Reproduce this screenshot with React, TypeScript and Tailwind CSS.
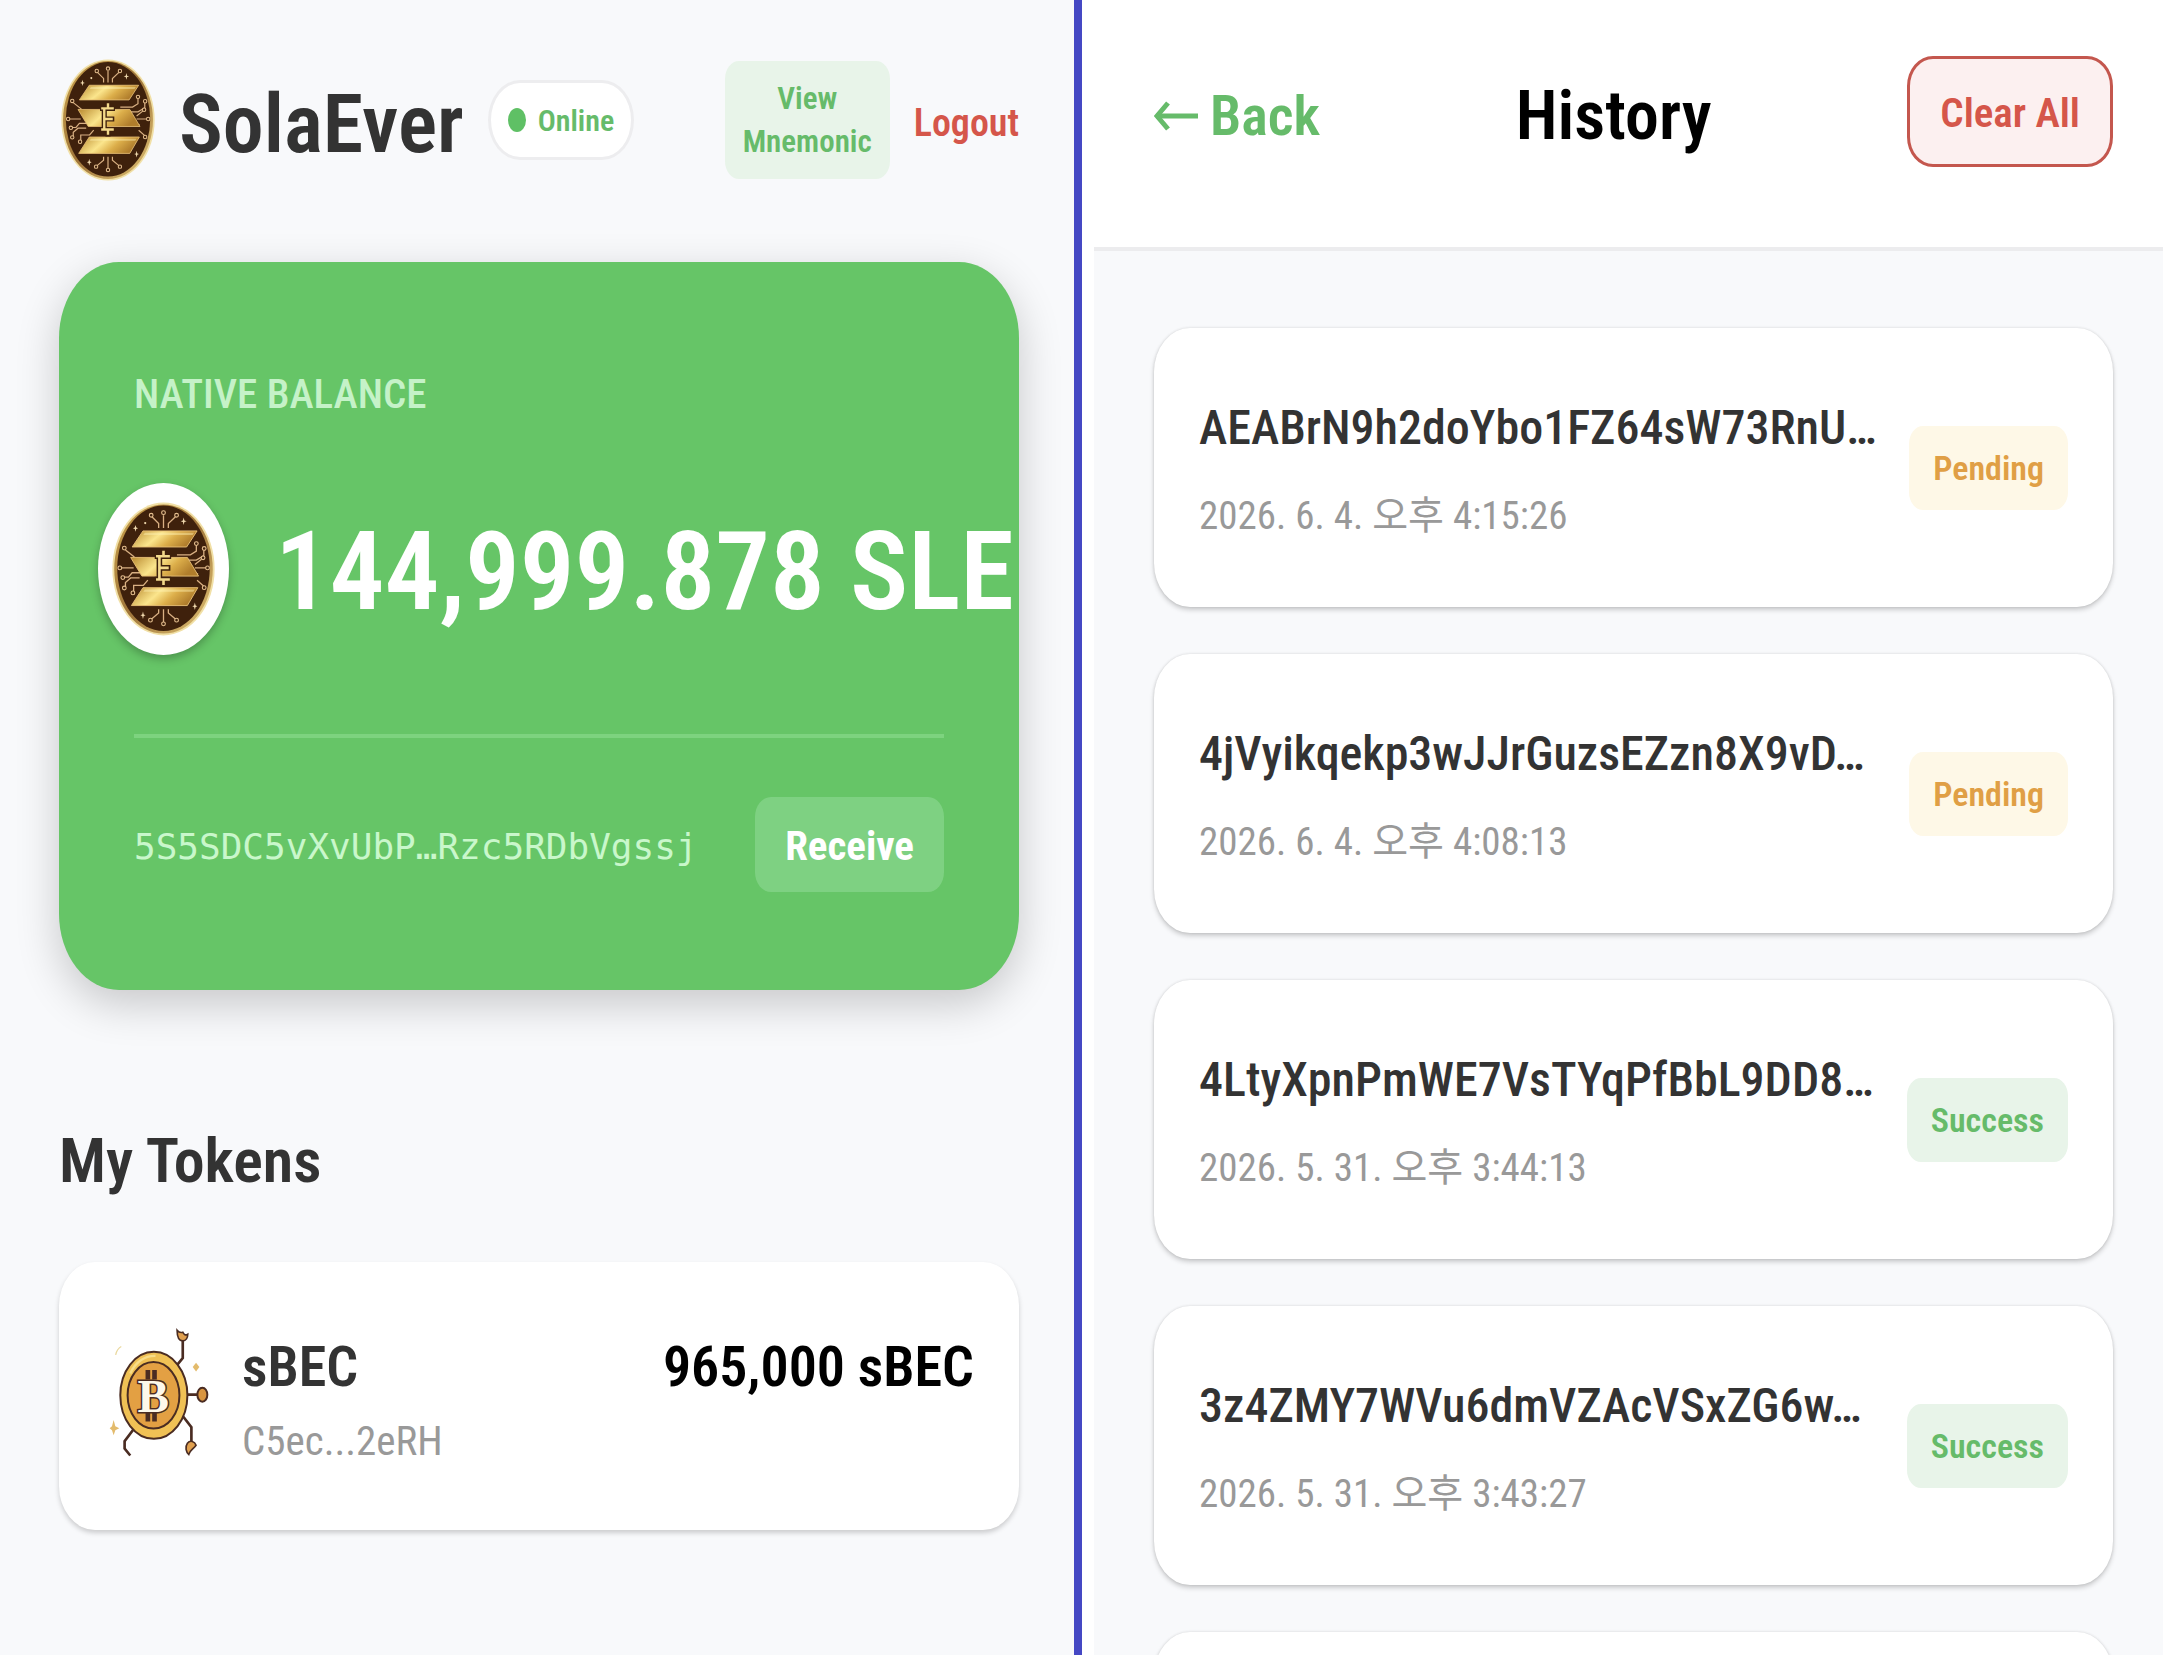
type Status = 'Pending' | 'Success'

type Tx = {
  signature: string
  date: string
  status: Status
}

const transactions: Tx[] = [
  { signature: 'AEABrN9h2doYbo1FZ64sW73RnU…', date: '2026. 6. 4. 오후 4:15:26', status: 'Pending' },
  { signature: '4jVyikqekp3wJJrGuzsEZzn8X9vD…', date: '2026. 6. 4. 오후 4:08:13', status: 'Pending' },
  { signature: '4LtyXpnPmWE7VsTYqPfBbL9DD8…', date: '2026. 5. 31. 오후 3:44:13', status: 'Success' },
  { signature: '3z4ZMY7WVu6dmVZAcVSxZG6w…', date: '2026. 5. 31. 오후 3:43:27', status: 'Success' },
]

const badgeColors: Record<Status, string> = {
  Pending: 'bg-[#fef8e7] text-[#e09f45]',
  Success: 'bg-[#e8f4e9] text-[#66bb6a]',
}

const cardStyle = 'rounded-[36px/44px] bg-white shadow-[0_3px_5px_rgba(0,0,0,0.18),0_0_3px_rgba(0,0,0,0.12)]'

function SolaLogo({ className }: { className: string }) {
  return (
    <svg viewBox="62 65 276 358" className={className} aria-hidden="true">
      <defs>
        <linearGradient id="gold" x1="0" y1="0" x2="1" y2="0.3">
          <stop offset="0" stopColor="#b8892f" />
          <stop offset="0.45" stopColor="#fbe58c" />
          <stop offset="0.7" stopColor="#dcae4a" />
          <stop offset="1" stopColor="#b07d2c" />
        </linearGradient>
        <linearGradient id="rim" x1="0" y1="0" x2="1" y2="1">
          <stop offset="0" stopColor="#c9a14c" />
          <stop offset="0.5" stopColor="#a0763a" />
          <stop offset="1" stopColor="#e3c578" />
        </linearGradient>
      </defs>
      <ellipse cx="200" cy="244" rx="137" ry="178" fill="#f1e0a6" />
      <ellipse cx="200" cy="244" rx="132" ry="173" fill="url(#rim)" />
      <ellipse cx="200" cy="242" rx="124" ry="168" fill="#3f210c" />
      <g fill="none" stroke="#d9b083" strokeWidth="3.5">
        <path d="M200 134V100M187 134V122L169 104M213 134V122L232 104" />
        <path d="M200 352V386M187 352V362L168 378M213 352V362L232 378" />
        <path d="M236 206H272L288 196V180M266 220H288L308 208V194M284 232L302 218M284 241H314M292 256L288 262" />
        <path d="M88 241H120M98 193L122 212M92 266H106L116 254H138M98 291V280L112 268H136M120 303V288H146L158 274M290 274L308 290" />
      </g>
      <g fill="#3f210c" stroke="#e5bf8f" strokeWidth="3">
        <circle cx="200" cy="93" r="5" />
        <circle cx="167" cy="100" r="5" />
        <circle cx="235" cy="100" r="5" />
        <circle cx="200" cy="391" r="5" />
        <circle cx="165" cy="381" r="5" />
        <circle cx="235" cy="381" r="5" />
        <circle cx="288" cy="176" r="5" />
        <circle cx="309" cy="189" r="5" />
        <circle cx="306" cy="214" r="5" />
        <circle cx="318" cy="241" r="5" />
        <circle cx="309" cy="294" r="5" />
        <circle cx="83" cy="241" r="5" />
        <circle cx="95" cy="188" r="5" />
        <circle cx="91" cy="267" r="5" />
        <circle cx="95" cy="295" r="5" />
        <circle cx="118" cy="308" r="5" />
      </g>
      <g fill="url(#gold)" stroke="#e6bd74" strokeWidth="2.5">
        <path d="M145 142H290L262 185H116Z" />
        <path d="M112 213H264L294 263H142Z" />
        <path d="M145 294H292L264 342H114Z" />
      </g>
      <path d="M150 147H282L278 153H146Z M150 299H284L280 305H146Z" fill="#fff2b4" opacity="0.45" />
      <g fill="#f0d9ae">
        <path d="M125 126L127 133L132 135L127 137L125 144L123 137L118 135L123 133Z" />
        <path d="M254 106L256 114L262 116L256 118L254 126L252 118L246 116L252 114Z" />
        <path d="M145 358L147 366L152 368L147 370L145 378L143 370L138 368L143 366Z" />
        <path d="M284 334L286 342L291 344L286 346L284 354L282 346L277 344L282 342Z" />
        <circle cx="151" cy="121" r="3" />
      </g>
      <g stroke="#3f210c" strokeWidth="15" fill="none" strokeLinecap="square">
        <path d="M200 197V208M200 274V285M189 211V271M184 210H213M189 241H211M184 272H213" />
      </g>
      <g stroke="#f3d98b" strokeWidth="7" fill="none">
        <path d="M200 195V209M200 273V287M189 207V275M180 210H217M189 241H214M180 272H217" />
      </g>
    </svg>
  )
}

function BecIcon({ className }: { className: string }) {
  return (
    <svg viewBox="80 75 310 444" className={className} aria-hidden="true">
      <g fill="none" stroke="#4a2c22" strokeWidth="8">
        <path d="M290 196L308 174V116M322 284H352M308 348L334 382V430M160 388L133 424V446L150 467" />
      </g>
      <path d="M291 90C291 112 298 122 308 122C318 122 323 112 323 102C316 106 312 104 308 96C302 98 296 96 291 90Z" fill="#e0a04f" stroke="#4a2c22" strokeWidth="5" />
      <path d="M348 436C344 424 330 420 322 430C314 442 318 456 326 464C330 450 340 448 348 436Z" fill="#e0a04f" stroke="#4a2c22" strokeWidth="5" />
      <ellipse cx="367" cy="284" rx="15" ry="21" fill="#d9953f" stroke="#4a2c22" strokeWidth="6" />
      <ellipse cx="221" cy="286" rx="101" ry="131" fill="#f0c155" stroke="#4a2c22" strokeWidth="6" />
      <ellipse cx="220" cy="286" rx="78" ry="100" fill="#e3a043" stroke="#4a2c22" strokeWidth="6" />
      <path d="M150 220C166 184 196 166 226 167" fill="none" stroke="#f8dd88" strokeWidth="7" />
      <path d="M203 210V238M223 210V238M203 336V365M223 336V365" stroke="#4a2c22" strokeWidth="14" />
      <text
        x="219"
        y="337"
        textAnchor="middle"
        fontSize="142"
        fontWeight="700"
        fill="#fdf8ea"
        stroke="#4a2c22"
        strokeWidth="9"
        paintOrder="stroke"
        className="font-['Liberation_Serif',serif]"
      >
        B
      </text>
      <g fill="#e3bb6c">
        <path d="M348 188L358 201L348 214L338 201Z" />
        <path d="M100 360L105 379L117 385L105 391L100 406L95 391L88 385L95 379Z" />
      </g>
      <path d="M106 164Q110 146 123 139" fill="none" stroke="#ead9a0" strokeWidth="4" />
    </svg>
  )
}

function BackArrow() {
  return (
    <svg viewBox="0 0 44 30" className="h-[30px] w-11" fill="none" stroke="currentColor" strokeWidth="5" aria-hidden="true">
      <path d="M2 15H44" />
      <path d="M14 2L3 15L14 28" />
    </svg>
  )
}

function Wallet() {
  return (
    <section className="min-w-0 bg-[#f8f9fb] pt-[61px] pr-[55px] pl-[59px]">
      <header className="flex h-[118px] items-center">
        <SolaLogo className="ml-0.5 h-[122px] w-[94px] shrink-0" />
        <h1 className="ml-6 pt-2 text-[82px] font-semibold text-[#333]">SolaEver</h1>
        <span className="ml-6 flex h-20 items-center gap-3 rounded-[32px/40px] border-[3px] border-[#ededef] bg-white px-[17px] text-[30px] font-semibold text-[#66bb6a]">
          <span className="h-6 w-[18px] rounded-[50%] bg-[#5fc065]" />
          Online
        </span>
        <button className="ml-auto h-full rounded-[14px/18px] bg-[#e8f4e9] px-[18px] text-[31px] leading-[43px] font-semibold text-[#66bb6a]">
          View
          <br />
          Mnemonic
        </button>
        <button className="ml-6 pt-1.5 text-[38px] font-semibold text-[#d5564a]">Logout</button>
      </header>

      <div className="mt-[83px] rounded-[60px/76px] bg-[#66c567] px-[75px] pt-[104px] pb-[98px] shadow-[0_14px_44px_rgba(0,0,0,0.2)]">
        <h2 className="text-[41px] leading-[56px] font-medium text-[#c5f2c8]">NATIVE BALANCE</h2>
        <div className="mt-[61px] -mr-[75px] -ml-9 flex h-[172px] items-center">
          <div className="flex h-[172px] w-[131px] shrink-0 items-center justify-center rounded-[50%] bg-white shadow-[0_4px_8px_rgba(0,0,0,0.25)]">
            <SolaLogo className="h-[134px] w-[103px]" />
          </div>
          <p className="ml-[46px] pt-2 text-[109px] font-semibold whitespace-nowrap text-white">144,999.878 SLE</p>
        </div>
        <div className="mt-[79px] flex items-center justify-between border-t-4 border-[#7dd37f] pt-[59px]">
          <span className="pt-1 font-['DejaVu_Sans_Mono',monospace] text-[36px] text-[#c9f7cb]">5S5SDC5vXvUbP…Rzc5RDbVgssj</span>
          <button className="h-[95px] rounded-[16px/20px] bg-[#7ed182] px-[30px] pt-1 text-[41px] font-bold text-white">Receive</button>
        </div>
      </div>

      <h2 className="mt-[131px] text-[62px] leading-[80px] font-semibold text-[#333]">My Tokens</h2>
      <div className="mt-[61px] flex rounded-[36px/44px] bg-white pt-[63px] pr-[45px] pb-[57px] pl-12 shadow-[0_3px_5px_rgba(0,0,0,0.18)]">
        <BecIcon className="h-[148px] w-[103px] shrink-0" />
        <div className="ml-8">
          <h3 className="text-[56px] leading-[84px] font-semibold text-[#333]">sBEC</h3>
          <p className="text-[41px] leading-[64px] text-[#999]">C5ec...2eRH</p>
        </div>
        <p className="ml-auto text-[56px] leading-[84px] font-semibold text-black">965,000 sBEC</p>
      </div>
    </section>
  )
}

function TxCard({ tx }: { tx: Tx }) {
  return (
    <li className={`flex h-[279px] items-center justify-between px-[45px] ${cardStyle}`}>
      <div className="min-w-0">
        <p className="text-[48px] leading-[96px] font-medium whitespace-nowrap text-[#333]">{tx.signature}</p>
        <p className="text-[39px] leading-[80px] text-[#999]">{tx.date}</p>
      </div>
      <span className={`rounded-[14px/18px] px-6 text-[34px] leading-[84px] font-semibold ${badgeColors[tx.status]}`}>{tx.status}</span>
    </li>
  )
}

function History() {
  return (
    <section className="min-w-0 pl-3">
      <header className="flex h-[251px] items-start border-b-4 border-[#ececee] bg-white pt-14 pr-[50px] pl-[60px]">
        <div className="flex h-[111px] w-full items-center justify-between">
          <button className="flex items-center gap-3 pt-2 text-[56px] font-semibold text-[#66bb6a]">
            <BackArrow />
            Back
          </button>
          <h1 className="pt-2 text-[68px] font-semibold text-black">History</h1>
          <button className="h-full rounded-[26px/30px] border-[3px] border-[#c4574e] bg-[#fcf0f0] px-[30px] pt-1 text-[41px] font-semibold text-[#d5564a]">
            Clear All
          </button>
        </div>
      </header>
      <ul className="flex h-full flex-col gap-[47px] bg-[#f8f9fb] pt-[77px] pr-[50px] pl-[60px]">
        {transactions.map((tx) => (
          <TxCard key={tx.signature} tx={tx} />
        ))}
        <li className={`h-[279px] shrink-0 ${cardStyle}`} />
      </ul>
    </section>
  )
}

export default function App() {
  return (
    <main className="grid h-screen grid-cols-[1074fr_8px_1081fr] overflow-hidden bg-white font-['Roboto_Condensed','Roboto','Noto_Sans_CJK_KR',sans-serif]">
      <Wallet />
      <div className="bg-[#4548c4]" />
      <History />
    </main>
  )
}
